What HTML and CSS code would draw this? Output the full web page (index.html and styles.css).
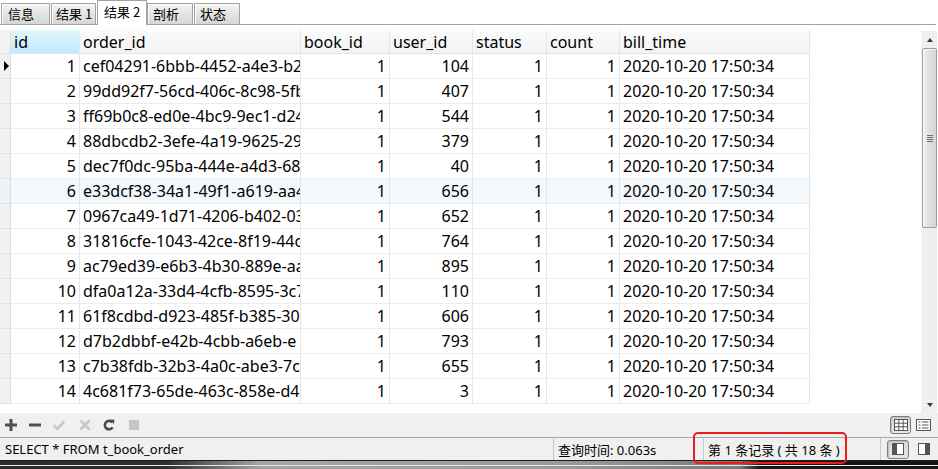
FILE: index.html
```html
<!DOCTYPE html>
<html lang="zh">
<head>
<meta charset="utf-8">
<title>结果 2</title>
<link rel="stylesheet" href="styles.css">
</head>
<body>
<div class="app">
  <div class="tabs">
    <div class="tab t1">信息</div>
    <div class="tab t2">结果 1</div>
    <div class="tab t3 active">结果 2</div>
    <div class="tab t4">剖析</div>
    <div class="tab t5">状态</div>
  </div>

  <div class="main">
    <div class="gridwrap">
      <div class="grid">
        <div class="ind hd"></div>
        <div class="hc sel">id</div>
        <div class="hc">order_id</div>
        <div class="hc">book_id</div>
        <div class="hc">user_id</div>
        <div class="hc">status</div>
        <div class="hc">count</div>
        <div class="hc">bill_time</div>

        <div class="ind"><span class="cur"></span></div><div class="c n">1</div><div class="c">cef04291-6bbb-4452-a4e3-b2f</div><div class="c n">1</div><div class="c n">104</div><div class="c n">1</div><div class="c n">1</div><div class="c">2020-10-20 17:50:34</div>
        <div class="ind"></div><div class="c n">2</div><div class="c">99dd92f7-56cd-406c-8c98-5fb</div><div class="c n">1</div><div class="c n">407</div><div class="c n">1</div><div class="c n">1</div><div class="c">2020-10-20 17:50:34</div>
        <div class="ind"></div><div class="c n">3</div><div class="c">ff69b0c8-ed0e-4bc9-9ec1-d24</div><div class="c n">1</div><div class="c n">544</div><div class="c n">1</div><div class="c n">1</div><div class="c">2020-10-20 17:50:34</div>
        <div class="ind"></div><div class="c n">4</div><div class="c">88dbcdb2-3efe-4a19-9625-29</div><div class="c n">1</div><div class="c n">379</div><div class="c n">1</div><div class="c n">1</div><div class="c">2020-10-20 17:50:34</div>
        <div class="ind"></div><div class="c n">5</div><div class="c">dec7f0dc-95ba-444e-a4d3-68</div><div class="c n">1</div><div class="c n">40</div><div class="c n">1</div><div class="c n">1</div><div class="c">2020-10-20 17:50:34</div>
        <div class="ind hov"></div><div class="c n hov">6</div><div class="c hov">e33dcf38-34a1-49f1-a619-aa4</div><div class="c n hov">1</div><div class="c n hov">656</div><div class="c n hov">1</div><div class="c n hov">1</div><div class="c hov">2020-10-20 17:50:34</div>
        <div class="ind"></div><div class="c n">7</div><div class="c">0967ca49-1d71-4206-b402-03</div><div class="c n">1</div><div class="c n">652</div><div class="c n">1</div><div class="c n">1</div><div class="c">2020-10-20 17:50:34</div>
        <div class="ind"></div><div class="c n">8</div><div class="c">31816cfe-1043-42ce-8f19-44c</div><div class="c n">1</div><div class="c n">764</div><div class="c n">1</div><div class="c n">1</div><div class="c">2020-10-20 17:50:34</div>
        <div class="ind"></div><div class="c n">9</div><div class="c">ac79ed39-e6b3-4b30-889e-aa</div><div class="c n">1</div><div class="c n">895</div><div class="c n">1</div><div class="c n">1</div><div class="c">2020-10-20 17:50:34</div>
        <div class="ind"></div><div class="c n">10</div><div class="c">dfa0a12a-33d4-4cfb-8595-3c7</div><div class="c n">1</div><div class="c n">110</div><div class="c n">1</div><div class="c n">1</div><div class="c">2020-10-20 17:50:34</div>
        <div class="ind"></div><div class="c n">11</div><div class="c">61f8cdbd-d923-485f-b385-30</div><div class="c n">1</div><div class="c n">606</div><div class="c n">1</div><div class="c n">1</div><div class="c">2020-10-20 17:50:34</div>
        <div class="ind"></div><div class="c n">12</div><div class="c">d7b2dbbf-e42b-4cbb-a6eb-e</div><div class="c n">1</div><div class="c n">793</div><div class="c n">1</div><div class="c n">1</div><div class="c">2020-10-20 17:50:34</div>
        <div class="ind"></div><div class="c n">13</div><div class="c">c7b38fdb-32b3-4a0c-abe3-7c</div><div class="c n">1</div><div class="c n">655</div><div class="c n">1</div><div class="c n">1</div><div class="c">2020-10-20 17:50:34</div>
        <div class="ind"></div><div class="c n">14</div><div class="c">4c681f73-65de-463c-858e-d4</div><div class="c n">1</div><div class="c n">3</div><div class="c n">1</div><div class="c n">1</div><div class="c">2020-10-20 17:50:34</div>
      </div>
    </div>
    <div class="vscroll">
      <div class="arrow up"></div>
      <div class="thumb"><span class="grip"></span></div>
      <div class="track"></div>
      <div class="arrow down"></div>
    </div>
  </div>

  <div class="toolbar">
    <div class="tools">
      <svg class="ico" width="12" height="12" viewBox="0 0 12 12"><path d="M6 0V12M0 6H12" stroke="#505050" stroke-width="3"/></svg>
      <svg class="ico" width="12" height="12" viewBox="0 0 12 12"><path d="M0 6H12" stroke="#505050" stroke-width="3"/></svg>
      <svg class="ico" width="12" height="12" viewBox="0 0 12 12"><path d="M0.8 6.2L4.4 9.8L11.2 2.4" fill="none" stroke="#c6c6c6" stroke-width="2.6"/></svg>
      <svg class="ico x" width="12" height="12" viewBox="0 0 12 12"><path d="M1.5 1.5L10.5 10.5M10.5 1.5L1.5 10.5" stroke="#c6c6c6" stroke-width="2.6"/></svg>
      <svg class="ico r" width="12" height="12" viewBox="0 0 12 12"><path d="M9.3 3.4A4.2 4.2 0 1 0 9.6 8.4" fill="none" stroke="#4a4a4a" stroke-width="2.6"/><path d="M7.2 0.6L11.6 0.8L10.8 5.2Z" fill="#4a4a4a"/></svg>
      <svg class="ico s" width="12" height="12" viewBox="0 0 12 12"><rect x="1" y="1" width="10" height="10" fill="#c6c6c6"/></svg>
    </div>
    <div class="views">
      <div class="vbtn pressed">
        <svg width="14" height="12" viewBox="0 0 14 12"><rect x="0.5" y="0.5" width="13" height="11" fill="#fff" stroke="#555"/><path d="M0.5 4.2H13.5M0.5 7.8H13.5M4.8 0.5V11.5M9.2 0.5V11.5" stroke="#555"/></svg>
      </div>
      <div class="vbtn">
        <svg width="15" height="12" viewBox="0 0 15 12"><rect x="0.5" y="0.5" width="14" height="11" fill="#fff" stroke="#555"/><path d="M2.5 3H4.5M6 3H12.5M2.5 6H4.5M6 6H12.5M2.5 9H4.5M6 9H12.5" stroke="#555" stroke-width="1.2"/></svg>
      </div>
    </div>
  </div>

  <div class="statusbar">
    <div class="sb sql">SELECT * FROM t_book_order</div>
    <div class="sb time">查询时间: 0.063s</div>
    <div class="sb rec">第 1 条记录 ( 共 18 条 )</div>
    <div class="sb btns">
      <div class="vbtn pressed small">
        <svg width="12" height="12" viewBox="0 0 12 12"><rect x="0.5" y="0.5" width="11" height="11" fill="#fff" stroke="#555"/><rect x="1" y="1" width="4" height="10" fill="#555"/></svg>
      </div>
      <div class="vbtn small">
        <svg width="12" height="12" viewBox="0 0 12 12"><rect x="0.5" y="0.5" width="11" height="11" fill="#fff" stroke="#555"/><rect x="7" y="1" width="4" height="10" fill="#555"/></svg>
      </div>
    </div>
  </div>

  <div class="taskbar"></div>

  <div class="mark"></div>
</div>
</body>
</html>
```

FILE: styles.css
```css
* { box-sizing: border-box; }
html, body { margin: 0; padding: 0; background: #fff; }
body {
  font-family: "Noto Sans", "Noto Sans CJK SC", sans-serif;
  color: #000;
  width: 938px;
  height: 469px;
  overflow: hidden;
}
.app {
  position: relative;
  width: 938px;
  height: 469px;
  display: flex;
  flex-direction: column;
}

/* tabs */
.tabs {
  height: 25px;
  width: 936px;
  flex: none;
  display: flex;
  align-items: flex-end;
  padding-left: 1px;
  border-bottom: 1px solid #a3a3a3;
}
.tab {
  height: 21px;
  margin-right: 1px;
  border: 1px solid #a3a3a3;
  border-bottom: none;
  background: linear-gradient(#f4f4f4, #e2e2e2 55%, #d6d6d6);
  box-shadow: inset 1px 1px 0 #fbfbfb;
  font-family: "Noto Sans CJK SC", sans-serif;
  font-size: 13px;
  line-height: 20px;
  padding-left: 6px;
  color: #000;
  white-space: pre;
}
.t1 { width: 49px; }
.t2 { width: 45px; padding-left: 4px; }
.t3 { width: 50px; }
.t4 { width: 46px; padding-left: 5px; }
.t5 { width: 46px; padding-left: 5px; }
.tab.active {
  height: 25px;
  margin-bottom: -1px;
  margin-right: 0;
  background: #fff;
  box-shadow: none;
  line-height: 22px;
  padding-left: 6px;
  position: relative;
}

/* grid area */
.main {
  height: 388px;
  flex: none;
  display: flex;
}
.gridwrap {
  flex: 1;
  padding-top: 5px;
  overflow: hidden;
}
.grid {
  display: grid;
  grid-template-columns: 11px 69px 221px 89px 83px 74px 73px 190px;
  grid-template-rows: 24px;
  grid-auto-rows: 25px;
  width: 810px;
  font-size: 16px;
}
.hc, .c {
  border-right: 1px solid #e6e6e6;
  border-bottom: 1px solid #ececec;
  white-space: nowrap;
  overflow: hidden;
  padding: 0 3px;
  display: flex;
  align-items: center;
}
.hc {
  background: linear-gradient(#fbfbfb, #f3f3f3);
  border-bottom-color: #e4e4e4;
}
.hc.sel {
  background: linear-gradient(#e3f6fd, #c2eafb);
  border-right-color: #d5eef9;
}
.c.n { justify-content: flex-end; }
.c.hov { background: #f3f8fc; }
.ind {
  background: #f1f1f1;
  border-right: 1px solid #dcdcdc;
  border-bottom: 1px solid #e4e4e4;
  position: relative;
  display: flex;
  align-items: center;
}
.ind.hd { background: #f2f2f2; }
.ind.hov { background: #eef2f5; }
.cur {
  width: 0; height: 0;
  margin-left: 4px;
  border-top: 5px solid transparent;
  border-bottom: 5px solid transparent;
  border-left: 5px solid #000;
}

/* vertical scrollbar */
.vscroll {
  width: 16px;
  margin: 6px 1px 0 0;
  background: #efefef;
  border-left: 1px solid #f6f6f6;
  display: flex;
  flex-direction: column;
  align-items: center;
}
.arrow {
  height: 17px;
  flex: none;
  display: flex;
  align-items: center;
  justify-content: center;
  width: 100%;
}
.arrow::before {
  content: "";
  width: 0; height: 0;
  border-left: 3px solid transparent;
  border-right: 3px solid transparent;
}
.arrow.up::before { border-bottom: 4px solid #3a3a3a; }
.arrow.down::before { border-top: 4px solid #3a3a3a; }
.thumb {
  flex: none;
  width: 15px;
  height: 180px;
  border: 1px solid #9d9d9d;
  border-radius: 2px;
  background: linear-gradient(to right, #f2f2f2, #e2e2e2 40%, #d4d4d4);
  box-shadow: inset 1px 1px 0 #fafafa;
  display: flex;
  align-items: center;
  justify-content: center;
}
.grip {
  width: 6px;
  height: 7px;
  background: repeating-linear-gradient(#6f6f6f 0 1px, transparent 1px 2px);
}
.track { flex: 1; }

/* toolbar */
.toolbar {
  height: 24px;
  flex: none;
  background: #f0f0f0;
  display: flex;
  align-items: center;
  justify-content: space-between;
  padding: 0 4px 0 5px;
}
.tools { display: flex; gap: 12px; align-items: center; }
.tools .x { margin-left: 2px; }
.tools .s { margin-left: 1px; }
.views { display: flex; align-items: center; gap: 2px; }
.vbtn {
  width: 21px;
  height: 18px;
  display: flex;
  align-items: center;
  justify-content: center;
  border: 1px solid transparent;
  border-radius: 3px;
}
.vbtn.pressed {
  border-color: #7d7d7d;
  background: linear-gradient(#d8d8d8, #e6e6e6);
  box-shadow: inset 1px 1px 1px #bcbcbc;
}
.vbtn.small { width: 22px; height: 19px; }

/* status bar */
.statusbar {
  height: 23px;
  flex: none;
  background: #f0f0f0;
  border-top: 1px solid #a8a8a8;
  display: flex;
  font-size: 13px;
  font-family: "Noto Sans", "Noto Sans CJK SC", sans-serif;
}
.sb {
  display: flex;
  align-items: center;
  white-space: pre;
}
.sql { width: 553px; padding-left: 5px; }
.time { width: 150px; padding-left: 4px; border-left: 1px solid #c9c9c9; }
.rec { width: 177px; padding-left: 4px; border-left: 1px solid #c9c9c9; }
.btns { flex: 1; border-left: 1px solid #c9c9c9; padding-left: 6px; gap: 4px; }

.taskbar {
  flex: 1;
  background:
    linear-gradient(#1c1c1c 0 1px, transparent 1px 5px, #e8e8e8 5px 6px, transparent 6px),
    linear-gradient(to right, #2c2c2c 0, #2e2e2e 165px, #a4a4a4 260px, #9a9a9a 560px, #7a7a7a 740px, #151515 760px, #151515 100%);
}

/* annotation overlay */
.mark {
  position: absolute;
  left: 693px;
  top: 432px;
  width: 154px;
  height: 32px;
  border: 2px solid #ea1c1c;
  border-radius: 5px;
  pointer-events: none;
}
```
